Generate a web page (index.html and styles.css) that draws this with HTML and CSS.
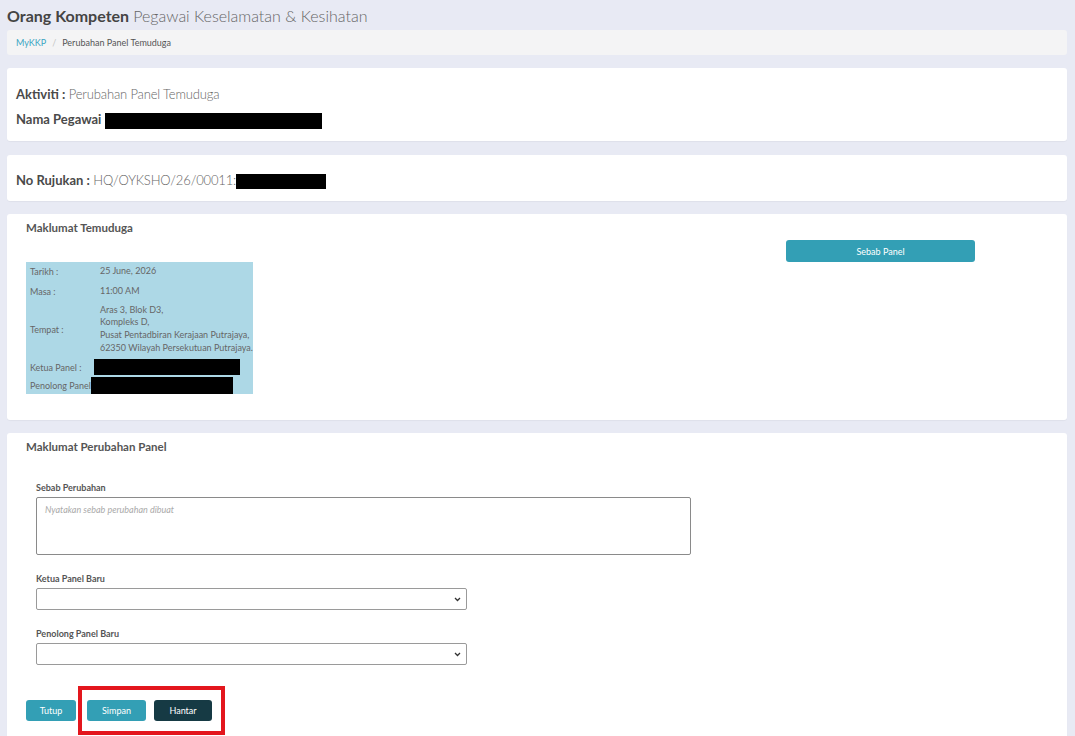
FILE: index.html
```html
<!DOCTYPE html>
<html lang="ms">
<head>
    <meta charset="UTF-8">
    <meta name="viewport" content="width=device-width, initial-scale=1.0">
    <title>Perubahan Panel Temuduga</title>
    <link rel="stylesheet" href="styles.css">
</head>
<body>
    <h1 class="page-title"><b>Orang Kompeten</b> <span>Pegawai Keselamatan &amp; Kesihatan</span></h1>

    <nav class="crumbs">
        <a href="#">MyKKP</a><span class="sep">/</span><span>Perubahan Panel Temuduga</span>
    </nav>

    <section class="card card-info">
        <p><b>Aktiviti :</b> <span class="light">Perubahan Panel Temuduga</span></p>
        <p><b>Nama Pegawai</b> <span class="redact redact-name"></span></p>
    </section>

    <section class="card card-ref">
        <p><b>No Rujukan :</b> <span class="light">HQ/OYKSHO/26/00011:</span><span class="redact redact-ref"></span></p>
    </section>

    <section class="card card-block">
        <h2 class="card-title">Maklumat Temuduga</h2>
        <div class="interview-row">
            <table class="interview">
                <tr class="r-date"><td class="lbl">Tarikh :</td><td class="val">25 June, 2026</td></tr>
                <tr class="r-time"><td class="lbl">Masa :</td><td class="val">11:00 AM</td></tr>
                <tr class="r-place">
                    <td class="lbl">Tempat :</td>
                    <td class="val">Aras 3, Blok D3,<br>Kompleks D,<br>Pusat Pentadbiran Kerajaan Putrajaya,<br>62350 Wilayah Persekutuan Putrajaya.</td>
                </tr>
                <tr class="r-chair"><td class="lbl">Ketua Panel :</td><td class="val bare"><span class="redact redact-chair"></span></td></tr>
                <tr class="r-help"><td class="lbl">Penolong Panel</td><td class="val bare"><span class="redact redact-help"></span></td></tr>
            </table>
            <button class="btn btn-wide">Sebab Panel</button>
        </div>
    </section>

    <section class="card card-block card-form">
        <h2 class="card-title">Maklumat Perubahan Panel</h2>
        <form class="change-form">
            <label class="field">
                <span>Sebab Perubahan</span>
                <textarea placeholder="Nyatakan sebab perubahan dibuat"></textarea>
            </label>
            <label class="field">
                <span>Ketua Panel Baru</span>
                <span class="select-wrap">
                    <select><option></option></select>
                    <svg class="chev" width="7" height="5" viewBox="0 0 7 5"><path d="M1 1l2.5 2.5L6 1" fill="none" stroke="#333" stroke-width="1.3"/></svg>
                </span>
            </label>
            <label class="field">
                <span>Penolong Panel Baru</span>
                <span class="select-wrap">
                    <select><option></option></select>
                    <svg class="chev" width="7" height="5" viewBox="0 0 7 5"><path d="M1 1l2.5 2.5L6 1" fill="none" stroke="#333" stroke-width="1.3"/></svg>
                </span>
            </label>
        </form>
        <div class="actions">
            <button class="btn">Tutup</button>
            <button class="btn btn-save">Simpan</button>
            <button class="btn btn-dark">Hantar</button>
            <div class="highlight"></div>
        </div>
    </section>
</body>
</html>
```

FILE: styles.css
```css
* {
    margin: 0;
    padding: 0;
    box-sizing: border-box;
}

body {
    font-family: 'Lato', 'Open Sans', sans-serif;
    background: #e8eaf4;
    color: #555;
    padding: 0 8px 0 7px;
}

.page-title {
    font-size: 16px;
    line-height: 24px;
    padding-top: 4px;
    color: #444;
    font-weight: 400;
}

.page-title b {
    font-weight: 700;
}

.page-title span {
    font-weight: 300;
    color: #666;
}

.crumbs {
    margin-top: 2px;
    height: 25px;
    background: #f4f4f5;
    border-radius: 3px;
    padding: 0 9px;
    display: flex;
    align-items: center;
    font-size: 9px;
    color: #555;
}

.crumbs a {
    color: #3ba5c2;
    text-decoration: none;
}

.crumbs .sep {
    color: #c4c4c4;
    margin: 0 6px;
}

.card {
    background: #fff;
    border-radius: 3px;
    box-shadow: 0 1px 1px rgba(0, 0, 0, 0.04);
}

.card-info {
    margin-top: 13px;
    padding: 14px 9px 9px;
    font-size: 13px;
    line-height: 25px;
}

.card-ref {
    margin-top: 14px;
    padding: 13px 9px 8px;
    font-size: 13px;
    line-height: 25px;
}

.card b {
    font-weight: 700;
    color: #4a4a4a;
}

.light {
    font-weight: 300;
    color: #666;
    letter-spacing: -0.15px;
}

.redact {
    display: inline-block;
    background: #000;
    vertical-align: middle;
}

.redact-name {
    width: 217px;
    height: 16px;
}

.redact-ref {
    width: 90px;
    height: 15px;
}

.card-block {
    margin-top: 13px;
    padding: 6px 19px 26px;
}

.card-title {
    font-size: 11.5px;
    line-height: 16px;
    font-weight: 700;
    color: #555;
}

.interview-row {
    margin-top: 4px;
    display: flex;
    justify-content: space-between;
    align-items: flex-start;
    padding-right: 73px;
}

.interview {
    margin-top: 22px;
    width: 227px;
    background: #add8e6;
    border-collapse: collapse;
    font-size: 9px;
    color: #666;
}

.interview td {
    padding: 0;
    vertical-align: middle;
    white-space: nowrap;
}

.interview .lbl {
    width: 64px;
    padding-left: 4px;
}

.interview .val {
    padding-left: 9px;
    line-height: 12.7px;
}

.interview .val.bare {
    padding-left: 0;
    line-height: 0;
}

.r-date td { height: 19px; }
.r-time td { height: 20px; }
.r-place td { height: 56px; }
.r-chair td { height: 20px; }
.r-help td { height: 17px; }

.redact-chair {
    width: 146px;
    height: 16px;
    margin-left: 3px;
}

.redact-help {
    width: 142px;
    height: 17px;
}

.btn {
    background: #339fb5;
    color: #fff;
    border: none;
    border-radius: 3px;
    font-family: inherit;
    font-size: 9px;
    height: 21px;
    padding: 0 12px;
    cursor: pointer;
}

.btn-wide {
    width: 189px;
    height: 22px;
}

.card-form {
    padding-bottom: 20px;
}

.change-form {
    margin-top: 27px;
    padding-left: 10px;
    display: flex;
    flex-direction: column;
    gap: 18px;
}

.field {
    display: flex;
    flex-direction: column;
    align-items: flex-start;
    gap: 3px;
    font-size: 9px;
    font-weight: 700;
    color: #555;
}

.field > span {
    line-height: 12px;
}

.field textarea {
    width: 655px;
    height: 58px;
    border: 1px solid #8a8a8a;
    border-radius: 2px;
    padding: 6px 8px;
    font-family: inherit;
    font-size: 9px;
    resize: none;
}

.field textarea::placeholder {
    font-style: italic;
    color: #aaa;
}

.select-wrap {
    position: relative;
    display: block;
    line-height: 0;
}

.field select {
    appearance: none;
    width: 431px;
    height: 22px;
    border: 1px solid #9a9a9a;
    border-radius: 2px;
    background: #fff;
    font-family: inherit;
    font-size: 9px;
}

.chev {
    position: absolute;
    right: 6px;
    top: 9px;
    pointer-events: none;
}

.actions {
    position: relative;
    margin-top: 35px;
    display: flex;
    gap: 8px;
}

.actions .btn {
    width: 50px;
    padding: 0;
}

.actions .btn-save {
    margin-left: 3px;
    width: 59px;
}

.actions .btn-dark {
    background: #163a44;
    width: 58px;
}

.highlight {
    position: absolute;
    left: 52px;
    top: -14px;
    width: 147px;
    height: 49px;
    border: 4px solid #e3161d;
    pointer-events: none;
}
```
